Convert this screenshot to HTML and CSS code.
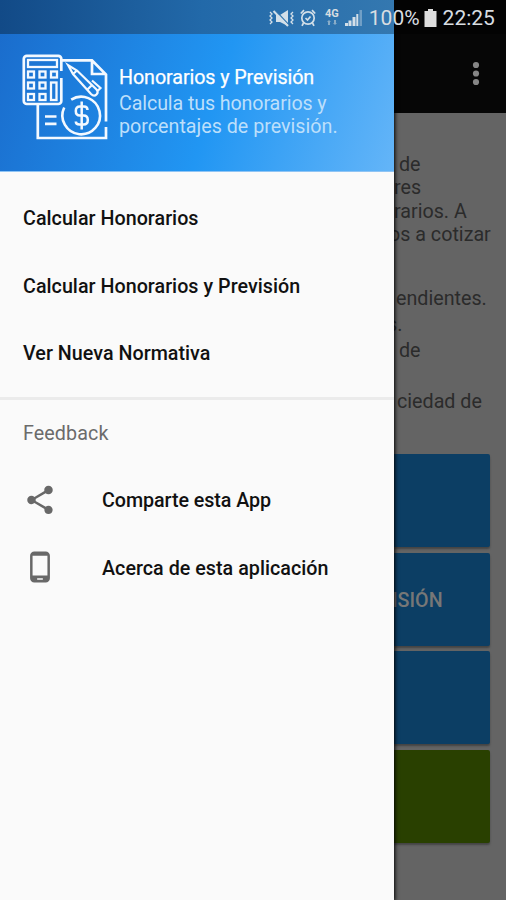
FILE: index.html
```html
<!DOCTYPE html>
<html lang="es">
<head>
<meta charset="utf-8">
<title>Honorarios y Previsión</title>
<link rel="stylesheet" href="styles.css">
</head>
<body>
<div class="screen">
  <aside class="drawer">
    <header class="drawer-header">
      <svg class="logo" width="86" height="86" viewBox="0 0 86 86" fill="none" stroke="#f4f9ff" stroke-width="2.700">
        <path d="M39.300 17V4.800a3 3 0 0 0-3-3H4.800a3 3 0 0 0-3 3V47a3 3 0 0 0 3 3H36.300a3 3 0 0 0 3-3V24"/>
        <rect x="6" y="6" width="29" height="7" stroke-width="2.300"/>
        <g stroke-width="2.300">
          <rect x="6" y="17.500" width="6" height="6"/><rect x="17.500" y="17.500" width="6" height="6"/><rect x="29" y="17.500" width="6" height="6"/>
          <rect x="6" y="28.500" width="6" height="6"/><rect x="17.500" y="28.500" width="6" height="6"/><rect x="29" y="28.500" width="5.500" height="17.500"/>
          <rect x="6" y="40" width="6" height="6"/><rect x="17.500" y="40" width="6" height="6"/>
        </g>
        <path d="M39 6.300H70L84 20.500V67.500M84 73V84H15.800V50M70 7V20H83"/>
        <path d="M23 62.500H34.500M23 69.800H34.500"/>
        <path stroke-width="2.200" d="M46 11L51 20L69 40Q72 43 74.500 40.500Q77 38 74 35L55 16.500ZM51 20L55 16.500M65.500 35.500L69.500 31.500M70 26.500L78.500 34L75.500 37"/>
        <path stroke-width="2.600" d="M49.200 45.600A18.800 18.800 0 1 1 42.200 53.500"/>
        <path stroke-width="2.500" d="M65.500 56Q65.500 52.500 62 52.500H58Q53.800 52.500 53.800 57T58 61.500H61.500Q65.800 61.500 65.800 66T61.500 70.500H57.500Q53.800 70.500 53.800 67.500M59.700 47.500V75.500"/>
      </svg>
      <div class="header-text">
        <h1 class="title">Honorarios y Previsión</h1>
        <p class="subtitle"><span class="tight">Calcula tus honorarios y</span><br>porcentajes de previsión.</p>
      </div>
    </header>
    <nav class="menu">
      <a class="item">Calcular Honorarios</a>
      <a class="item">Calcular Honorarios y Previsión</a>
      <a class="item">Ver Nueva Normativa</a>
    </nav>
    <section class="feedback">
      <h2 class="section-title">Feedback</h2>
      <a class="item">
        <svg class="icon" width="34" height="34" viewBox="0 0 24 24" fill="#686868"><path d="M18 16.080c-.76 0-1.440.3-1.960.77L8.910 12.700c.05-.23.09-.46.09-.7s-.04-.47-.09-.7l7.050-4.110c.54.5 1.250.81 2.040.81 1.660 0 3-1.340 3-3s-1.340-3-3-3-3 1.340-3 3c0 .24.04.47.09.7L8.040 9.810C7.500 9.310 6.790 9 6 9c-1.660 0-3 1.340-3 3s1.340 3 3 3c.79 0 1.500-.31 2.040-.81l7.120 4.160c-.05.21-.08.43-.08.65 0 1.610 1.310 2.920 2.920 2.920s2.920-1.310 2.920-2.920-1.310-2.920-2.920-2.920z"/></svg>
        <span class="share">Comparte esta App</span>
      </a>
      <a class="item">
        <svg class="icon" width="34" height="34" viewBox="0 0 24 24" fill="#686868"><path d="M16 1H8C6.340 1 5 2.340 5 4v16c0 1.660 1.340 3 3 3h8c1.660 0 3-1.340 3-3V4c0-1.660-1.340-3-3-3zm-2 20h-4v-1h4v1zm3.250-3H6.750V4h10.500v14z"/></svg>
        <span>Acerca de esta aplicación</span>
      </a>
    </section>
  </aside>
  <main class="page">
    <div class="toolbar">
      <svg width="12" height="26" viewBox="0 0 12 26" fill="#858585"><circle cx="6" cy="5" r="3.100"/><circle cx="6" cy="13.500" r="3.100"/><circle cx="6" cy="22" r="3.100"/></svg>
    </div>
    <div class="copy">
      <p class="para intro">de<br><span class="cut-a">res</span><br><span class="cut-b">rarios. A</span><br><span class="cut-c">os a cotizar</span></p>
      <p class="para"><span class="cut-d">endientes.</span></p>
      <p class="para"><span class="cut-e">s.</span></p>
      <p class="para last">de</p>
      <p class="para"><span class="cut-f">ciedad de</span></p>
    </div>
    <div class="buttons">
      <div class="button"></div>
      <div class="button"><span>ISIÓN</span></div>
      <div class="button"></div>
      <div class="button green"></div>
    </div>
  </main>
  <div class="status">
    <svg class="mute" width="27" height="18" viewBox="0 0 27 18" fill="none" stroke="#d3dfe8" stroke-width="1.300">
      <path d="M2 3l2 2-2 2 2 2-2 2 2 2-2 2M25 3l-2 2 2 2-2 2 2 2-2 2 2 2"/>
      <path fill="#d3dfe8" stroke="none" d="M8 6h4l8-5v16l-8-4H8z"/>
      <path stroke="#2f74ad" stroke-width="1.200" d="M7 1L21 16"/><path stroke-width="2" d="M5.500 2L20 17"/>
    </svg>
    <svg class="alarm" width="16" height="18" viewBox="0 0 16 18" fill="none" stroke="#d3dfe8" stroke-width="1.700">
      <circle cx="8" cy="9" r="6.200"/><path d="M.8 4.500L4 1.200M15.200 4.500L12 1.200M3.500 14L2 16.800M12.500 14L14 16.800M5.500 9l2 2 3-3.500"/>
    </svg>
    <span class="net"><b>4G</b><svg width="10" height="6" viewBox="0 0 10 6" fill="#88acc8"><path d="M2 0l2 2H3v3H1V2H0zM8 5L6 3h1V0h2v3h1z"/></svg></span>
    <svg class="signal" width="17" height="17" viewBox="0 0 17 17" fill="#d3dfe8">
      <path d="M0 14h3v3H0zM3.500 11.500h3V17h-3zM7.500 8h3v9h-3zM11.300 5h2v12h-2z"/><path opacity=".4" d="M14.500 1H17v16h-2.500z"/>
    </svg>
    <span class="percent">100%</span>
    <svg class="battery" width="13" height="18" viewBox="0 0 13 18" fill="#ddd"><path d="M4 0h5v2h3.500v16H.5V2H4z"/></svg>
    <span class="clock">22:25</span>
  </div>
</div>
</body>
</html>
```

FILE: styles.css
```css
* { box-sizing: border-box; }

body {
  margin: 0;
  font-family: Roboto, "Liberation Sans", sans-serif;
  font-size: 19.7px;
}

h1, h2, p { margin: 0; font-size: inherit; font-weight: 400; }

.screen {
  position: relative;
  display: grid;
  grid-template-columns: 394px 112px;
  width: 506px;
  height: 900px;
  overflow: hidden;
  background: #646464;
}

.drawer {
  z-index: 1;
  background: #fafafa;
  box-shadow: 0 0 4px 1px #000;
}

.drawer-header {
  display: flex;
  height: 172px;
  padding: 54px 0 0 22px;
  background: linear-gradient(108deg, #1a6bcb 0%, #2196f3 55%, #64b5f8 100%);
  border-bottom: 1px solid #8fc4f4;
}

.logo { flex: none; }

.header-text {
  padding: 12px 0 0 11px;
  line-height: 23.4px;
  white-space: nowrap;
  color: #fff;
}

.title { height: 26px; letter-spacing: -.08px; -webkit-text-stroke: .25px #fff; }
.subtitle { color: #bcdffb; }
.tight { letter-spacing: -.12px; }

.menu {
  height: 228px;
  padding-top: 13px;
  border-bottom: 3px solid #ebebeb;
}

.item {
  display: flex;
  align-items: center;
  height: 67.5px;
  padding-left: 23px;
  color: #111;
  font-weight: 500;
  letter-spacing: .03px;
}

.item span { padding-top: 2px; }
.item .share { letter-spacing: -.06px; }

.section-title {
  height: 66px;
  padding: 22px 0 0 23px;
  line-height: 24px;
  color: #6b6b6b;
  letter-spacing: .1px;
}

.icon { margin-right: 45px; }

.page { min-width: 0; overflow: hidden; }

.toolbar {
  display: flex;
  justify-content: flex-end;
  height: 113px;
  padding: 60px 24px 0 0;
  background: #060606;
}

.copy {
  height: 341px;
  padding: 40px 0 0 5px;
  line-height: 23.4px;
  color: #2b2b2b;
  white-space: nowrap;
}

.para { margin-bottom: 3px; }
.para.intro { margin-bottom: 40px; }
.para.last { margin-bottom: 27px; }
.cut-a { margin-left: -5px; }
.cut-b { margin-left: -5px; }
.cut-c { margin-left: -10px; }
.cut-d { margin-left: -3px; }
.cut-e { margin-left: -12px; }
.cut-f { margin-left: -2px; }

.buttons { display: grid; gap: 5.5px; }

.button {
  width: 96px;
  height: 93px;
  padding-top: 36px;
  line-height: 24px;
  border-radius: 0 2px 2px 0;
  background: #0c3e64;
  color: #777;
  font-weight: 500;
  box-shadow: 0 2px 2px #444;
}

.button span { margin-left: -2px; }
.button.green { background: #294000; }

.status {
  position: absolute;
  z-index: 2;
  inset: 0 0 auto;
  display: flex;
  align-items: center;
  height: 34px;
  padding: 1px 0 0 268px;
  background: linear-gradient(90deg, #124a87 0, #2269a9 40%, #3478b0 394px, #030303 394px);
  color: #d8dde1;
  font-size: 21px;
}

.alarm { margin-left: 5px; }
.net { display: grid; justify-items: center; gap: 2px; margin-left: 9px; font-size: 11px; line-height: 9px; }
.signal { margin-left: 6px; }
.percent { margin-left: 7px; }
.battery { margin-left: 4px; }
.clock { margin-left: 6px; }
```
